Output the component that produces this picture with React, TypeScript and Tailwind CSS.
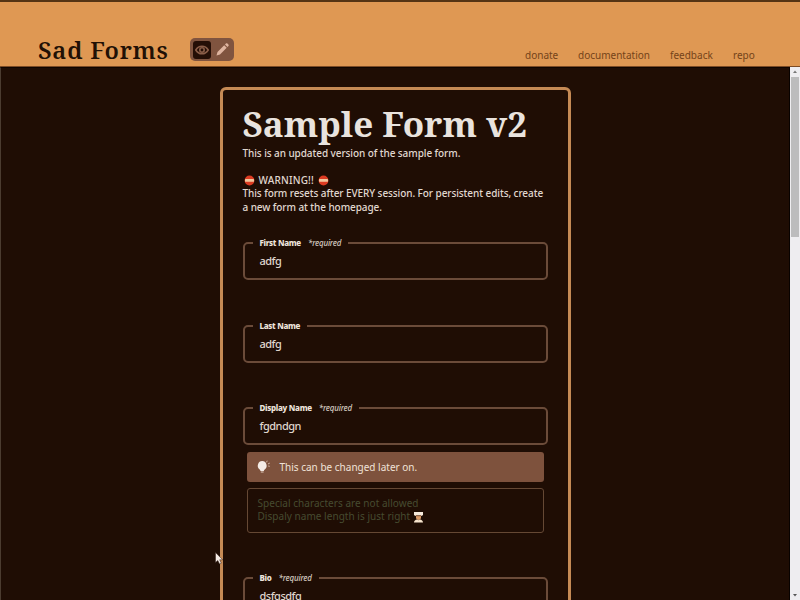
import React from "react";

const serif = "font-['Noto_Serif',serif]";

function StopIcon() {
  return (
    <svg width="11" height="11" viewBox="0 0 11 11" className="inline-block shrink-0">
      <circle cx="5.5" cy="5.5" r="4.9" fill="#dc3b22" />
      <rect x="1" y="4.1" width="9" height="2.6" rx="0.5" fill="#f0c79d" />
    </svg>
  );
}

function BulbIcon() {
  return (
    <svg width="14" height="14" viewBox="0 0 14 14">
      <path d="M5.2 1.1a4.6 4.6 0 0 0-2.8 8.100c.8.6.9 1.100 1 1.700h3.500c.1-.6.3-1.100 1.100-1.700a4.600 4.600 0 0 0-2.800-8.100Z" fill="#f5ece6" />
      <path d="M3.8 11.4h2.8v1.2H3.8z" fill="#d3b8a8" />
      <path d="M9.5 2.3l.7-1.600M11 4l1.800-.9M11.200 6l1.500.3" stroke="#dcc0af" strokeWidth="0.9" />
    </svg>
  );
}

function ChefIcon() {
  return (
    <svg width="11" height="12" viewBox="0 0 11 12" className="inline-block">
      <path d="M1 1h9v3L8.6 5H2.4L1 4z" fill="#f6eadc" />
      <path d="M3 4.4h5v2.2c0 1.5-1 2.4-2.5 2.4S3 8.1 3 6.600z" fill="#d99a68" />
      <path d="M2.7 4.2h5.6v1H2.7z" fill="#795039" />
      <path d="M1 11.5c0-2 1.500-2.900 3-3.100l1.500.9L7 8.400c1.500.2 3 1.100 3 3.100z" fill="#f6e4cd" />
    </svg>
  );
}

function Field({ label, value, required = false }: { label: string; value: string; required?: boolean }) {
  return (
    <fieldset className="h-[43px] w-[305px] rounded-[5px] border-2 border-[#6b4b39] pl-[8px]">
      <legend className="flex h-[12px] items-center px-[7px] text-[8px] leading-[12px] text-[#eee4dc]">
        <span className="font-extrabold tracking-[-0.3px]">{label}</span>
        {required && <em className="ml-[7px] text-[8px] font-medium tracking-[-0.2px] text-[#d5cbc0]">*required</em>}
      </legend>
      <div className="mt-[4px] pl-[7px] text-[11px] leading-[15px] font-medium tracking-[-0.5px] text-[#dfd5cd]">{value}</div>
    </fieldset>
  );
}

export default function App() {
  return (
    <div className="relative flex h-[600px] w-[800px] flex-col overflow-hidden bg-[#1f0d04] font-['Noto_Sans',sans-serif]">
      <header className="flex h-[67px] shrink-0 items-start border-t-2 border-b border-t-[#553414] border-b-[#7c4b25] bg-[#df9853] pl-[38px]">
        <div className={"mt-[32px] w-[152px] text-[24px] leading-[32px] font-semibold tracking-[0.75px] whitespace-nowrap text-[#211005] " + serif}>Sad Forms</div>
        <div className="mt-[36px] flex h-[23px] w-[44px] items-center rounded-[5px] bg-[#80543f] pl-[3px]">
          <div className="flex h-[18px] w-[18px] items-center justify-center rounded-[3px] bg-[#240e06]">
            <svg width="14" height="12" viewBox="0 0 14 12" fill="none" stroke="#8a5d48" strokeWidth="1.6">
              <path d="M.8 6C3.700 1 10.300 1 13.200 6 10.300 11 3.700 11 .8 6Z" />
              <circle cx="7" cy="6" r="2.200" />
            </svg>
          </div>
          <svg width="15" height="15" viewBox="0 0 15 15" className="ml-[4px]">
            <path d="M1.500 13.500l1-3.500 6.700-6.700 2.500 2.500L5 12.500zM10 2.500l.9-.9c.5-.5 1-.5 1.500 0l1 1c.5.5.5 1 0 1.500l-.9.900z" fill="#dfb5a0" />
          </svg>
        </div>
        <nav className="mt-[46px] ml-[291px] flex text-[10px] leading-[14px] text-[#744319]">
          <a className="w-[53px]">donate</a>
          <a className="w-[92px]">documentation</a>
          <a className="w-[63px]">feedback</a>
          <a>repo</a>
        </nav>
      </header>

      <div className="flex min-h-0 flex-1">
        <main className="flex flex-1 justify-center overflow-hidden border-t border-r border-l border-t-[#100500] border-r-[#080200] border-l-[#4b3c30] pt-[19px]">
          <section className="h-[620px] w-[351px] shrink-0 rounded-[6px] border-[3px] border-[#c58a55] pt-[11px] pl-[20px]">
            <h1 className={"h-[46px] text-[35px] leading-[46px] font-bold whitespace-nowrap text-[#e9e3de] " + serif}>Sample Form v2</h1>
            <div className="text-[10px] leading-[13.4px] font-medium tracking-[-0.08px] whitespace-nowrap text-[#e0d8d0]">
              <p>This is an updated version of the sample form.</p>
              <p className="mt-[13.4px] flex items-center gap-[4px] pl-[1px]"><StopIcon /><span className="tracking-[0.2px]">WARNING!!</span><StopIcon /></p>
              <p>This form resets after EVERY session. For persistent edits, create</p>
              <p>a new form at the homepage.</p>
            </div>
            <div className="mt-[23.4px] flex flex-col gap-[39.3px]">
              <Field label="First Name" value="adfg" required />
              <Field label="Last Name" value="adfg" />
              <Field label="Display Name" value="fgdndgn" required />
            </div>
            <div className="mt-[7px] ml-[4px] flex h-[30px] w-[297px] items-center rounded-[3px] bg-[#7e523d] pl-[10px] text-[10px] text-[#f0e2d8]">
              <BulbIcon />
              <span className="ml-[9px]">This can be changed later on.</span>
            </div>
            <div className="mt-[6px] ml-[4px] h-[45px] w-[297px] rounded-[3px] border border-[#654834] pt-[8px] pl-[10px] text-[10px] leading-[13.4px] tracking-[0.04px] text-[#464b30]">
              <p>Special characters are not allowed</p>
              <p className="flex items-center gap-[3px]">Dispaly name length is just right <ChefIcon /></p>
            </div>
            <div className="mt-[39px]">
              <Field label="Bio" value="dsfgsdfg" required />
            </div>
          </section>
        </main>
        <aside className="flex w-[10px] flex-col items-center bg-[#eeedf0]">
          <svg width="10" height="10" viewBox="0 0 10 10"><path d="M3 6l2-2.500L7 6z" fill="#777" /></svg>
          <div className="h-[160px] w-[8px] bg-[#bcbcbd]" />
          <svg width="10" height="10" viewBox="0 0 10 10" className="mt-auto"><path d="M3 4l2 2.500L7 4z" fill="#555" /></svg>
        </aside>
      </div>
      <svg width="9" height="13" viewBox="0 0 9 13" className="absolute top-[552px] left-[215px]">
        <path d="M.5.500v10l2.300-2 1.700 3.500 1.800-.8-1.600-3.400h3z" fill="#f4eae5" stroke="#332019" strokeWidth=".5" />
      </svg>
    </div>
  );
}
